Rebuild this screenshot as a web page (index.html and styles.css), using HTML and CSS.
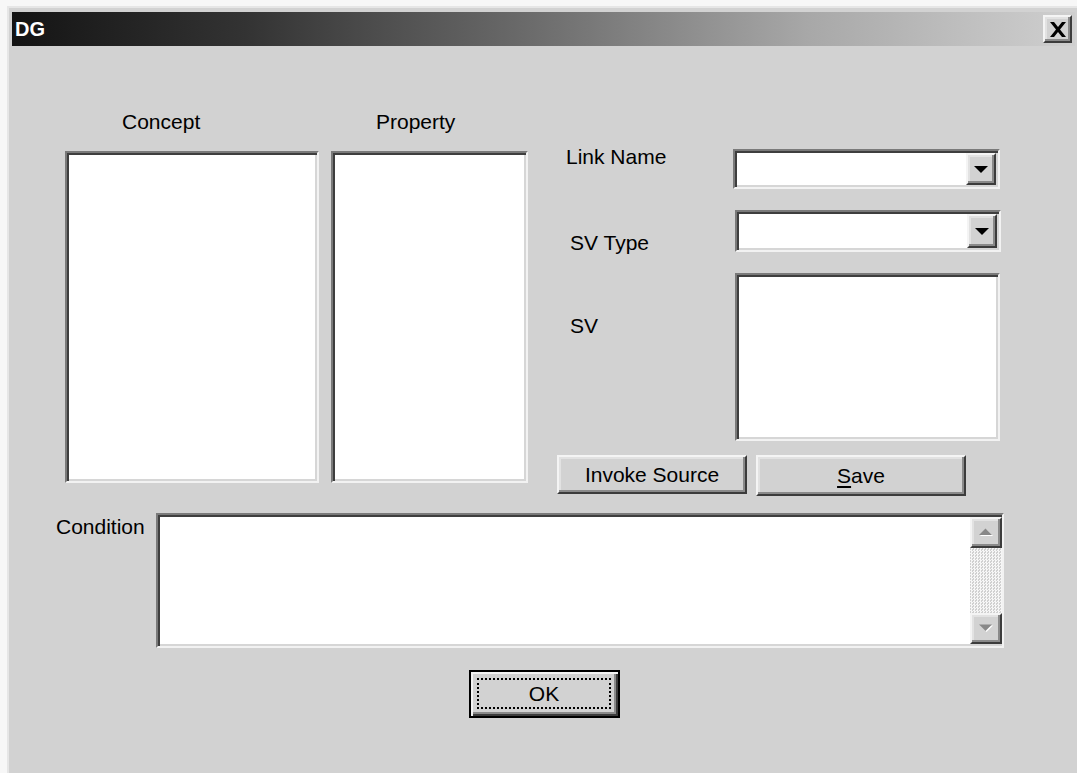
FILE: index.html
```html
<!DOCTYPE html>
<html lang="en">
<head>
<meta charset="utf-8">
<title>DG</title>
<link rel="stylesheet" href="styles.css">
</head>
<body>
<div class="window">
  <div class="titlebar">
    <span class="title">DG</span>
    <button class="close raised" aria-label="Close">
      <svg width="18" height="15" viewBox="0 0 18 15">
        <path d="M1 0h4l4 5 4-5h4l-6 7.5 6 7.5h-4l-4-5-4 5h-4l6-7.5z" fill="#000"/>
      </svg>
    </button>
  </div>

  <div class="client">
    <div class="top">
      <div class="col concept">
        <div class="caption">Concept</div>
        <div class="listbox sunken"></div>
      </div>
      <div class="col property">
        <div class="caption">Property</div>
        <div class="listbox sunken"></div>
      </div>

      <div class="form">
        <div class="row row-link">
          <span class="label">Link Name</span>
          <div class="combo sunken">
            <span class="drop raised">
              <svg width="14" height="7" viewBox="0 0 14 7"><path d="M0 0h14L7 7z" fill="#000"/></svg>
            </span>
          </div>
        </div>
        <div class="row row-type">
          <span class="label">SV Type</span>
          <div class="combo sunken">
            <span class="drop raised">
              <svg width="14" height="7" viewBox="0 0 14 7"><path d="M0 0h14L7 7z" fill="#000"/></svg>
            </span>
          </div>
        </div>
        <div class="row row-sv">
          <span class="label">SV</span>
          <div class="textbox sunken"></div>
        </div>
        <div class="actions">
          <button class="btn raised invoke">Invoke Source</button>
          <button class="btn raised save"><u>S</u>ave</button>
        </div>
      </div>
    </div>

    <div class="condition-row">
      <span class="label">Condition</span>
      <div class="memo sunken">
        <div class="vscroll">
          <span class="arrow raised">
            <svg width="16" height="9" viewBox="0 0 16 9">
              <path d="M2 8h13L8.5 1.5z" fill="#fff"/>
              <path d="M1 7h13L7.5 0.5z" fill="#888"/>
            </svg>
          </span>
          <span class="track"></span>
          <span class="arrow raised">
            <svg width="16" height="9" viewBox="0 0 16 9">
              <path d="M2 1.5h13L8.5 8z" fill="#fff"/>
              <path d="M1 0.5h13L7.5 7z" fill="#888"/>
            </svg>
          </span>
        </div>
      </div>
    </div>

    <div class="ok-row">
      <button class="btn default"><span class="focus">OK</span></button>
    </div>
  </div>
</div>
</body>
</html>
```

FILE: styles.css
```css
html, body {
  margin: 0;
  height: 100%;
  overflow: hidden;
}

body {
  background: #f7f7f7;
  font-family: "Liberation Sans", Arial, sans-serif;
  font-size: 21px;
  color: #000;
}

/* dialog frame */
.window {
  margin: 6px 0 0 7px;
  width: 1075px;
  height: 780px;
  box-sizing: border-box;
  border-left: 2px solid #e6e6e6;
  border-top: 2px solid #e6e6e6;
  padding: 4px 0 0 3px;
  background: #d2d2d2;
}

.titlebar {
  width: 1063px;
  height: 34px;
  display: flex;
  align-items: center;
  justify-content: space-between;
  background: linear-gradient(to right, #141414 0%, #333 22%, #6e6e6e 50%, #a8a8a8 75%, #cfcfcf 100%);
}

.title {
  padding-left: 3px;
  color: #fff;
  font-weight: bold;
  font-size: 20px;
  line-height: 34px;
}

.close {
  width: 29px;
  height: 28px;
  margin-right: 3px;
  padding: 0;
  display: flex;
  align-items: center;
  justify-content: center;
}

/* 3D bevels */
.raised {
  box-sizing: border-box;
  background: #d2d2d2;
  border: 2px solid;
  border-color: #f4f4f4 #3c3c3c #3c3c3c #f4f4f4;
  box-shadow: inset -2px -2px 0 #8a8a8a, inset 2px 2px 0 #e2e2e2;
}

.sunken {
  box-sizing: border-box;
  background: #fff;
  border: 2px solid;
  border-color: #7a7a7a #f2f2f2 #f2f2f2 #7a7a7a;
  box-shadow: inset 2px 2px 0 #3e3e3e, inset -2px -2px 0 #d6d6d6;
}

/* top section: two lists and the link form */
.client {
  width: 1063px;
}

.top {
  display: flex;
  height: 390px;
  margin: 61px 0 0 53px;
}

.col {
  display: flex;
  flex-direction: column;
}

.caption {
  height: 24px;
  line-height: 24px;
  padding-top: 3px;
  margin-bottom: 17px;
}

.concept {
  width: 254px;
}

.concept .caption {
  padding-left: 57px;
}

.property {
  width: 197px;
  margin-left: 12px;
}

.property .caption {
  padding-left: 45px;
}

.listbox {
  height: 332px;
}

.form {
  width: 447px;
  margin-left: 29px;
  display: flex;
  flex-direction: column;
}

.row {
  display: flex;
  align-items: flex-start;
}

.label {
  line-height: 24px;
  white-space: nowrap;
  box-sizing: border-box;
}

.row-link {
  margin-top: 42px;
  height: 40px;
}

.row-link .label {
  width: 176px;
  padding-left: 9px;
  margin-top: -4px;
}

.row-link .combo {
  width: 267px;
}

.row-type {
  margin-top: 21px;
  height: 42px;
}

.row-type .label {
  width: 178px;
  padding-left: 13px;
  margin-top: 21px;
}

.row-type .combo {
  width: 266px;
}

.row-sv {
  margin-top: 21px;
  height: 168px;
}

.row-sv .label {
  width: 178px;
  padding-left: 13px;
  margin-top: 41px;
}

.textbox {
  width: 265px;
  height: 168px;
}

.combo {
  height: 100%;
  display: flex;
  justify-content: flex-end;
  padding: 2px;
}

.drop {
  width: 30px;
  height: 100%;
  display: flex;
  align-items: center;
  justify-content: center;
}

/* push buttons */
.btn {
  font-family: inherit;
  font-size: 21px;
  color: #000;
  padding: 0;
  margin: 0;
}

.btn u {
  text-underline-offset: 3px;
}

.actions {
  display: flex;
  align-items: flex-start;
  gap: 9px;
  margin-top: 14px;
}

.invoke {
  width: 190px;
  height: 39px;
}

.save {
  width: 210px;
  height: 41px;
}

/* condition memo */
.condition-row {
  display: flex;
  align-items: flex-start;
  margin-top: 16px;
  height: 135px;
}

.condition-row .label {
  width: 144px;
  padding-left: 44px;
  margin-top: 2px;
}

.memo {
  width: 848px;
  height: 135px;
  display: flex;
  justify-content: flex-end;
  padding: 2px 0 2px 2px;
}

.vscroll {
  width: 32px;
  display: flex;
  flex-direction: column;
}

.arrow {
  height: 31px;
  display: flex;
  align-items: center;
  justify-content: center;
}

.track {
  flex: 1;
  background: repeating-conic-gradient(#f6f6f6 0 25%, #d0d0d0 0 50%) 0 0 / 3px 3px;
}

/* default button */
.ok-row {
  margin-top: 22px;
  padding-left: 457px;
}

.default {
  width: 151px;
  height: 48px;
  box-sizing: border-box;
  border: 2px solid #000;
  background: #d2d2d2;
  box-shadow: inset 2px 2px 0 #f4f4f4, inset -2px -2px 0 #3c3c3c, inset -4px -4px 0 #8a8a8a;
  padding: 6px 7px 7px 6px;
  display: flex;
}

.focus {
  flex: 1;
  border: 2px dotted #000;
  display: flex;
  align-items: center;
  justify-content: center;
  line-height: 1;
}
```
